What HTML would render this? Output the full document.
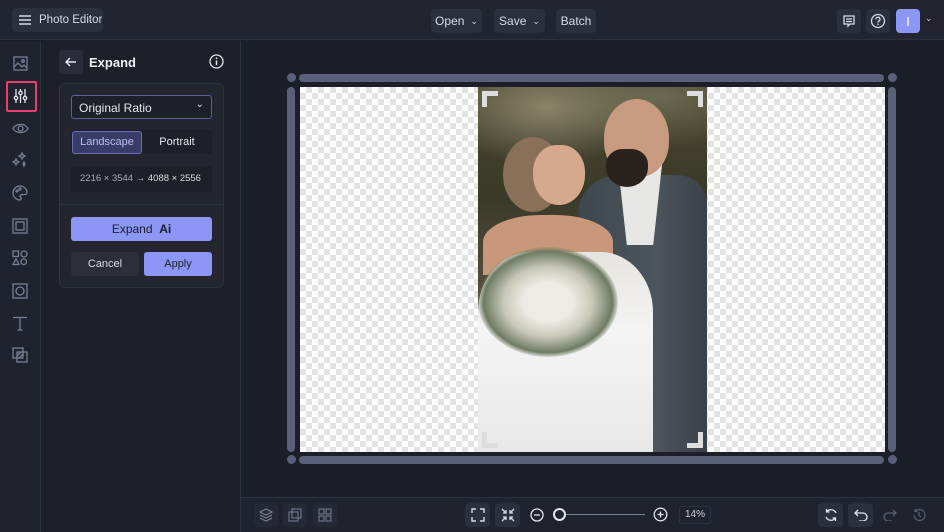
<!DOCTYPE html>
<html><head><meta charset="utf-8"><style>
*{box-sizing:border-box;margin:0;padding:0}
body{width:944px;height:532px;background:#1c1e28;font-family:"Liberation Sans",sans-serif;color:#e4e6ee;position:relative;overflow:hidden;font-size:12px}
.abs{position:absolute}
.top{left:0;top:0;width:944px;height:40px;background:#22242f;border-bottom:1px solid #2e3140}
.btn{position:absolute;background:#2c2f3c;border-radius:4px;height:24px;display:flex;align-items:center;justify-content:center;color:#d8dae4;font-size:12px;white-space:nowrap}
.side{left:0;top:41px;width:41px;height:491px;background:#20222d;border-right:1px solid #2e3140}
.panel{left:41px;top:41px;width:200px;height:491px;background:#1e2029;border-right:1px solid #2e3140}
.bottom{left:241px;top:497px;width:703px;height:35px;background:#20222d;border-top:1px solid #2e3140}
svg{display:block}
.ic{position:absolute;stroke:#7a7f96;fill:none;stroke-width:1.3}
.checker{background-color:#fff;background-image:linear-gradient(45deg,#e3e3e3 25%,transparent 25%,transparent 75%,#e3e3e3 75%),linear-gradient(45deg,#e3e3e3 25%,transparent 25%,transparent 75%,#e3e3e3 75%);background-size:12px 12px;background-position:0 0,6px 6px}
.bar{background:#5a607a;border-radius:4px}
.dot{width:9px;height:9px;border-radius:50%;background:#5a607a}
</style></head><body>
<div class="abs top"></div>
<div class="btn" style="left:12px;top:8px;width:91px;justify-content:flex-start;padding-left:6px;font-size:11.5px">
<svg width="14" height="12" style="margin-right:7px;flex:none"><path d="M1 2h12M1 6h12M1 10h12" stroke="#d8dae4" stroke-width="1.4"/></svg>Photo Editor</div>
<div class="btn" style="left:431px;top:9px;width:51px">Open <span style="font-size:9px;margin-left:6px">⌄</span></div>
<div class="btn" style="left:494px;top:9px;width:51px">Save <span style="font-size:9px;margin-left:6px">⌄</span></div>
<div class="btn" style="left:556px;top:9px;width:40px">Batch</div>
<div class="btn" style="left:837px;top:9px;width:24px"><svg width="14" height="14"><path d="M2 2h10v8H8l-2 2v-2H2z M4 5h6M4 7.5h6" stroke="#d8dae4" fill="none" stroke-width="1.3"/></svg></div>
<div class="btn" style="left:866px;top:9px;width:24px"><svg width="16" height="16"><circle cx="8" cy="8" r="6.5" stroke="#d8dae4" fill="none" stroke-width="1.3"/><path d="M6 6.3a2 2 0 1 1 2.7 1.8c-.5.2-.7.5-.7 1v.5" stroke="#d8dae4" fill="none" stroke-width="1.3"/><circle cx="8" cy="11.3" r=".8" fill="#d8dae4"/></svg></div>
<div class="btn" style="left:896px;top:9px;width:24px;background:#8c96f5;color:#fff;font-size:13px">I</div>
<div class="abs" style="left:925px;top:13px;font-size:9px;color:#ccc">⌄</div>

<div class="abs side"></div>
<svg class="ic" style="left:13px;top:56px" width="15" height="15"><rect x="1" y="1" width="13" height="13"/><path d="M1 11l4-4 4 4 2-2 3 3"/><circle cx="10" cy="5" r="1.3"/></svg>
<div class="abs" style="left:6px;top:81px;width:31px;height:31px;border:2px solid #e83e72;border-radius:2px"></div>
<svg class="ic" style="left:13px;top:88px;stroke:#e4e6ee" width="15" height="16"><path d="M3 1v14M7.5 1v14M12 1v14"/><circle cx="3" cy="10" r="1.7" fill="#20222d"/><circle cx="7.5" cy="5" r="1.7" fill="#20222d"/><circle cx="12" cy="10" r="1.7" fill="#20222d"/></svg>
<svg class="ic" style="left:12px;top:122px" width="17" height="13"><path d="M1 6.5C4 1 13 1 16 6.5 13 12 4 12 1 6.5z"/><circle cx="8.5" cy="6.5" r="2.5"/></svg>
<svg class="ic" style="left:12px;top:152px" width="17" height="16"><path d="M10 1l1 2 2 1-2 1-1 2-1-2-2-1 2-1zM4 7l1 2 2 1-2 1-1 2-1-2-2-1 2-1zM12 10l1 2-1 2-1-2z"/></svg>
<svg class="ic" style="left:12px;top:185px" width="16" height="16"><path d="M8 1a7 7 0 1 0 0 14c1.5 0 1.5-2 .5-3s0-2.5 1.5-2.5H13a2 2 0 0 0 2-2A7 7 0 0 0 8 1z"/><circle cx="5" cy="6" r="1"/><circle cx="8" cy="4" r="1"/></svg>
<svg class="ic" style="left:12px;top:218px" width="16" height="16"><rect x="1" y="1" width="14" height="14"/><rect x="4" y="4" width="8" height="8"/></svg>
<svg class="ic" style="left:12px;top:250px" width="16" height="16"><rect x="1" y="1" width="5.5" height="5.5"/><circle cx="12" cy="4" r="3"/><path d="M4 9l3 5.5H1z"/><rect x="9" y="9" width="5.5" height="5.5" rx="2.7"/></svg>
<svg class="ic" style="left:12px;top:283px" width="16" height="16"><rect x="1" y="1" width="14" height="14"/><circle cx="8" cy="8" r="4"/></svg>
<svg class="ic" style="left:12px;top:316px" width="16" height="15"><path d="M1 1.5h14M8 1.5V14M5.5 14h5"/></svg>
<svg class="ic" style="left:12px;top:347px" width="16" height="16"><rect x="1" y="1" width="10" height="10"/><rect x="5" y="5" width="10" height="10"/><path d="M5 9l4-4M7 11l4-4"/></svg>

<div class="abs panel"></div>
<div class="btn" style="left:59px;top:50px;width:24px;background:#2a2d39"><svg width="12" height="10"><path d="M11 5H1M5 1L1 5l4 4" stroke="#e4e6ee" fill="none" stroke-width="1.4"/></svg></div>
<div class="abs" style="left:89px;top:55px;font-size:13px;font-weight:bold;color:#eef0f6">Expand</div>
<svg class="abs" style="left:209px;top:54px" width="15" height="15"><circle cx="7.5" cy="7.5" r="6.5" stroke="#e4e6ee" fill="none" stroke-width="1.3"/><path d="M7.5 6.5v4.5" stroke="#e4e6ee" stroke-width="1.5"/><circle cx="7.5" cy="4.3" r=".9" fill="#e4e6ee"/></svg>
<div class="abs" style="left:59px;top:83px;width:165px;height:205px;background:#23252f;border:1px solid #2e3140;border-radius:6px"></div>
<div class="abs" style="left:71px;top:95px;width:141px;height:24px;border:1.5px solid #5c5f9a;border-radius:3px;background:#1e2029;padding:5px 7px;font-size:12px">Original Ratio<span style="position:absolute;right:7px;top:3px;font-size:10px">⌄</span></div>
<div class="abs" style="left:71px;top:130px;width:141px;height:24px;background:#1e2029;border-radius:3px"></div>
<div class="abs" style="left:72px;top:131px;width:70px;height:23px;background:#3a3c68;border:1px solid #6a6eb8;border-radius:3px;color:#b8bcf0;font-size:11px;text-align:center;line-height:21px">Landscape</div>
<div class="abs" style="left:143px;top:131px;width:68px;height:23px;color:#e4e6ee;font-size:11px;text-align:center;line-height:22px">Portrait</div>
<div class="abs" style="left:71px;top:166px;width:141px;height:26px;background:#1e2029;border-radius:3px;color:#a8abb8;font-size:9.5px;line-height:26px;padding-left:9px">2216 × 3544 <span style="color:#ddd">→</span> <span style="color:#ddd">4088 × 2556</span></div>
<div class="abs" style="left:60px;top:204px;width:163px;height:1px;background:#2e3140"></div>
<div class="abs" style="left:71px;top:217px;width:141px;height:24px;background:#8c96f5;border-radius:3px;color:#1c1e28;text-align:center;line-height:24px;font-size:12px">Expand &nbsp;<b>Ai</b></div>
<div class="abs" style="left:71px;top:252px;width:68px;height:24px;background:#2c2f3a;border-radius:3px;color:#d8dae4;text-align:center;line-height:24px;font-size:11px">Cancel</div>
<div class="abs" style="left:144px;top:252px;width:68px;height:24px;background:#8c96f5;border-radius:3px;color:#1c1e28;text-align:center;line-height:24px;font-size:11px">Apply</div>

<!-- canvas -->
<div class="abs checker" style="left:300px;top:87px;width:585px;height:365px"></div>
<div class="abs" style="left:478px;top:87px;width:229px;height:365px;overflow:hidden;background:linear-gradient(180deg,#4a4630 0%,#3a3a28 30%,#5a5040 60%,#6a5a44 100%)">
 <div class="abs" style="left:0;top:0;width:229px;height:100px;background:radial-gradient(ellipse at 30% 20%,#8a8468 0%,transparent 50%),radial-gradient(ellipse at 80% 10%,#6a6a50 0%,transparent 40%)"></div>
 <!-- suit -->
 <div class="abs" style="left:100px;top:88px;width:129px;height:277px;background:linear-gradient(90deg,#3e464e,#4c545c 60%,#3a4148);border-radius:40px 30px 0 0"></div>
 <div class="abs" style="left:140px;top:78px;width:44px;height:80px;background:#e6e6e4;clip-path:polygon(0 0,100% 0,80% 100%,20% 100%)"></div>
 <!-- man head -->
 <div class="abs" style="left:126px;top:12px;width:65px;height:78px;border-radius:50% 50% 45% 45%;background:#c89a80"></div>
 <div class="abs" style="left:128px;top:62px;width:42px;height:38px;border-radius:40% 40% 50% 50%;background:#2a221c"></div>
 <!-- woman -->
 <div class="abs" style="left:25px;top:50px;width:60px;height:75px;border-radius:50%;background:#8a7058"></div>
 <div class="abs" style="left:55px;top:58px;width:52px;height:60px;border-radius:45% 45% 50% 50%;background:#d6a88e"></div>
 <div class="abs" style="left:5px;top:128px;width:130px;height:60px;border-radius:45% 45% 0 0;background:#c9987a"></div>
 <div class="abs" style="left:0;top:165px;width:175px;height:200px;background:linear-gradient(180deg,#e6e4e0,#f4f4f4 40%,#e8e8e8);border-radius:30% 30% 0 0"></div>
 <div class="abs" style="left:0;top:160px;width:140px;height:110px;border-radius:50%;background:radial-gradient(#ecebe4 25%,#c8c8b8 45%,#6e7c62 65%,transparent 72%)"></div>
 <div class="abs" style="left:4px;top:4px;width:16px;height:16px;border-left:5px solid #ddd;border-top:5px solid #ddd"></div>
 <div class="abs" style="right:4px;top:4px;width:16px;height:16px;border-right:5px solid #ddd;border-top:5px solid #ddd"></div>
 <div class="abs" style="left:4px;bottom:4px;width:16px;height:16px;border-left:5px solid #ddd;border-bottom:5px solid #ddd"></div>
 <div class="abs" style="right:4px;bottom:4px;width:16px;height:16px;border-right:5px solid #ddd;border-bottom:5px solid #ddd"></div>
</div>
<div class="abs bar" style="left:299px;top:74px;width:585px;height:8px"></div>
<div class="abs bar" style="left:299px;top:456px;width:585px;height:8px"></div>
<div class="abs bar" style="left:287px;top:87px;width:8px;height:365px"></div>
<div class="abs bar" style="left:888px;top:87px;width:8px;height:365px"></div>
<div class="abs dot" style="left:287px;top:73px"></div>
<div class="abs dot" style="left:888px;top:73px"></div>
<div class="abs dot" style="left:287px;top:455px"></div>
<div class="abs dot" style="left:888px;top:455px"></div>

<div class="abs bottom"></div>
<div class="btn" style="left:254px;top:503px;width:24px;background:#262935"><svg width="14" height="14"><path d="M7 1l6 3-6 3-6-3zM1 7l6 3 6-3M1 10l6 3 6-3" stroke="#7a7f96" fill="none" stroke-width="1.2"/></svg></div>
<div class="btn" style="left:283px;top:503px;width:24px;background:#262935"><svg width="14" height="14"><rect x="1" y="4" width="9" height="9" stroke="#7a7f96" fill="none"/><rect x="4" y="1" width="9" height="9" stroke="#7a7f96" fill="none"/></svg></div>
<div class="btn" style="left:313px;top:503px;width:24px;background:#262935"><svg width="14" height="14"><g stroke="#7a7f96" fill="none"><rect x="1" y="1" width="5" height="5"/><rect x="8" y="1" width="5" height="5"/><rect x="1" y="8" width="5" height="5"/><rect x="8" y="8" width="5" height="5"/></g></svg></div>
<div class="btn" style="left:465px;top:503px;width:25px"><svg width="14" height="14"><path d="M1 5V1h4M9 1h4v4M13 9v4H9M5 13H1V9" stroke="#d8dae4" fill="none" stroke-width="1.4"/></svg></div>
<div class="btn" style="left:495px;top:503px;width:25px"><svg width="14" height="14"><path d="M1 1l4 4M5 2v3H2M13 1L9 5M9 2v3h3M1 13l4-4M2 9h3v3M13 13L9 9M12 9H9v3" stroke="#d8dae4" fill="none" stroke-width="1.3"/></svg></div>
<svg class="abs" style="left:530px;top:508px" width="14" height="14"><circle cx="7" cy="7" r="6" stroke="#e4e6ee" fill="none" stroke-width="1.3"/><path d="M4 7h6" stroke="#e4e6ee" stroke-width="1.3"/></svg>
<div class="abs" style="left:560px;top:514px;width:85px;height:1px;background:#7a7f96"></div>
<div class="abs" style="left:553px;top:508px;width:13px;height:13px;border-radius:50%;border:2px solid #e4e6ee;background:#20222d"></div>
<svg class="abs" style="left:653px;top:507px" width="15" height="15"><circle cx="7.5" cy="7.5" r="6.3" stroke="#e4e6ee" fill="none" stroke-width="1.3"/><path d="M4.5 7.5h6M7.5 4.5v6" stroke="#e4e6ee" stroke-width="1.3"/></svg>
<div class="abs" style="left:679px;top:506px;width:32px;height:18px;border:1px solid #2e3140;border-radius:3px;font-size:10px;text-align:center;line-height:16px;color:#cfd1da">14%</div>
<div class="btn" style="left:818px;top:503px;width:25px"><svg width="14" height="14"><path d="M12 5A5.5 5.5 0 0 0 2.5 4M2 9a5.5 5.5 0 0 0 9.5 1M2.5 1v3h3M11.5 13v-3h-3" stroke="#e4e6ee" fill="none" stroke-width="1.3"/></svg></div>
<div class="btn" style="left:848px;top:503px;width:25px"><svg width="14" height="12"><path d="M4 1L1 4l3 3M1 4h8a4 4 0 0 1 0 8H5" stroke="#e4e6ee" fill="none" stroke-width="1.3"/></svg></div>
<svg class="abs" style="left:883px;top:509px" width="14" height="12"><path d="M10 1l3 3-3 3M13 4H5a4 4 0 0 0 0 8h4" stroke="#5a5e70" fill="none" stroke-width="1.3"/></svg>
<svg class="abs" style="left:912px;top:508px" width="14" height="14"><path d="M2 7a5.5 5.5 0 1 0 1.5-3.8M3 1v2.5h2.5M7 4v3.5l2 1.5" stroke="#5a5e70" fill="none" stroke-width="1.2"/></svg>
</body></html>
